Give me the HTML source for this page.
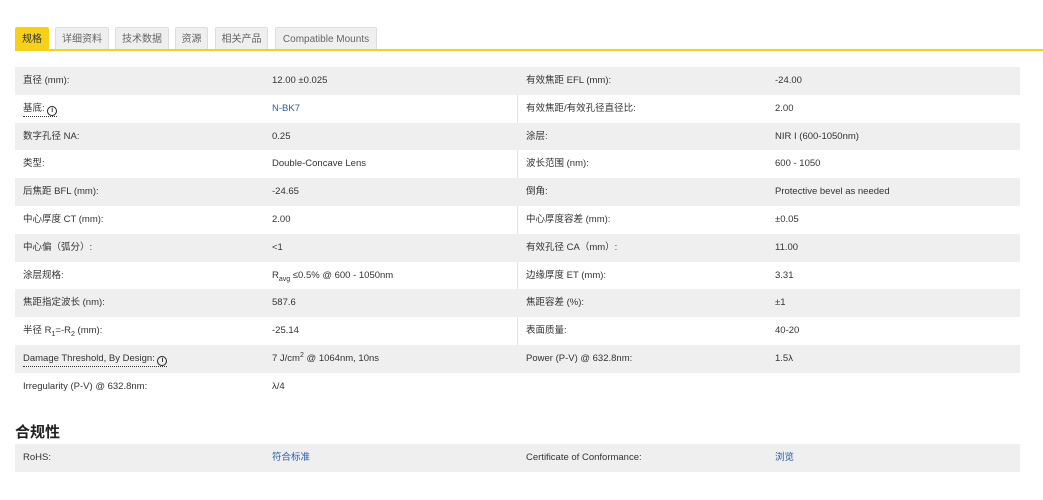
<!DOCTYPE html>
<html><head><meta charset="utf-8"><style>
body{margin:0;background:#fff;font-family:"Liberation Sans","Noto Sans CJK SC",sans-serif;color:#333;font-size:9.5px;width:1043px;height:500px;overflow:hidden;position:relative}
.tabs{position:absolute;top:27px;left:15px;height:23px}
.tab{position:absolute;top:0;height:22px;line-height:23px;background:#efefef;border:1px solid #ddd;border-bottom:none;color:#666;font-size:10px;text-align:center;border-radius:2px 2px 0 0;box-sizing:border-box}
.tab.on{background:#f7d117;color:#333;border-color:#f7d117}
.line{position:absolute;top:49px;left:15px;right:0;height:2px;background:#f7d117}
.tbl{position:absolute;left:15px;width:1005px}
.row{height:27.8px;position:relative}
.row.g{background:#efefef}
.row span{position:absolute;top:0;line-height:27.8px;white-space:nowrap}
.c1{left:8px}.c2{left:257px}.c3{left:511px}.c4{left:760px}
.vl{position:absolute;left:502px;top:0;bottom:0;width:1px;background:#e2e2e2}
.lnk{color:#2a5aa8}
.row span.dot{border-bottom:1px dotted #333;line-height:12px;top:8px}
.i{display:inline-block;width:8px;height:8px;border:1.3px solid #222;border-radius:50%;font-size:7px;line-height:8px;text-align:center;font-weight:bold;vertical-align:-1px}
h3{position:absolute;top:421px;left:15px;margin:0;font-size:15px;font-weight:bold;color:#222}
sub,sup{font-size:7px;line-height:0}
</style></head><body>
<div class="tabs">
<div class="tab on" style="left:0;width:34px">规格</div>
<div class="tab" style="left:40px;width:54px">详细资料</div>
<div class="tab" style="left:100px;width:54px">技术数据</div>
<div class="tab" style="left:160px;width:33px">资源</div>
<div class="tab" style="left:200px;width:53px">相关产品</div>
<div class="tab" style="left:260px;width:102px">Compatible Mounts</div>
</div>
<div class="line"></div>
<div class="tbl" style="top:67px">
<div class="vl" style="height:306px"></div>
<div class="row g"><span class="c1">直径 (mm):</span><span class="c2">12.00 ±0.025</span><span class="c3">有效焦距 EFL (mm):</span><span class="c4">-24.00</span></div>
<div class="row"><span class="c1 dot">基底: <b class="i">i</b></span><span class="c2 lnk">N-BK7</span><span class="c3">有效焦距/有效孔径直径比:</span><span class="c4">2.00</span></div>
<div class="row g"><span class="c1">数字孔径 NA:</span><span class="c2">0.25</span><span class="c3">涂层:</span><span class="c4">NIR I (600-1050nm)</span></div>
<div class="row"><span class="c1">类型:</span><span class="c2">Double-Concave Lens</span><span class="c3">波长范围 (nm):</span><span class="c4">600 - 1050</span></div>
<div class="row g"><span class="c1">后焦距 BFL (mm):</span><span class="c2">-24.65</span><span class="c3">倒角:</span><span class="c4">Protective bevel as needed</span></div>
<div class="row"><span class="c1">中心厚度 CT (mm):</span><span class="c2">2.00</span><span class="c3">中心厚度容差 (mm):</span><span class="c4">±0.05</span></div>
<div class="row g"><span class="c1">中心偏（弧分）:</span><span class="c2">&lt;1</span><span class="c3">有效孔径 CA（mm）:</span><span class="c4">11.00</span></div>
<div class="row"><span class="c1">涂层规格:</span><span class="c2">R<sub>avg</sub> ≤0.5% @ 600 - 1050nm</span><span class="c3">边缘厚度 ET (mm):</span><span class="c4">3.31</span></div>
<div class="row g"><span class="c1">焦距指定波长 (nm):</span><span class="c2">587.6</span><span class="c3">焦距容差 (%):</span><span class="c4">±1</span></div>
<div class="row"><span class="c1">半径 R<sub>1</sub>=-R<sub>2</sub> (mm):</span><span class="c2">-25.14</span><span class="c3">表面质量:</span><span class="c4">40-20</span></div>
<div class="row g"><span class="c1 dot">Damage Threshold, By Design: <b class="i">i</b></span><span class="c2">7 J/cm<sup>2</sup> @ 1064nm, 10ns</span><span class="c3">Power (P-V) @ 632.8nm:</span><span class="c4">1.5λ</span></div>
<div class="row"><span class="c1">Irregularity (P-V) @ 632.8nm:</span><span class="c2">λ/4</span></div>
</div>
<h3>合规性</h3>
<div class="tbl" style="top:444px">
<div class="row g"><span class="c1">RoHS:</span><span class="c2 lnk">符合标准</span><span class="c3">Certificate of Conformance:</span><span class="c4 lnk">浏览</span></div>
</div>
</body></html>
